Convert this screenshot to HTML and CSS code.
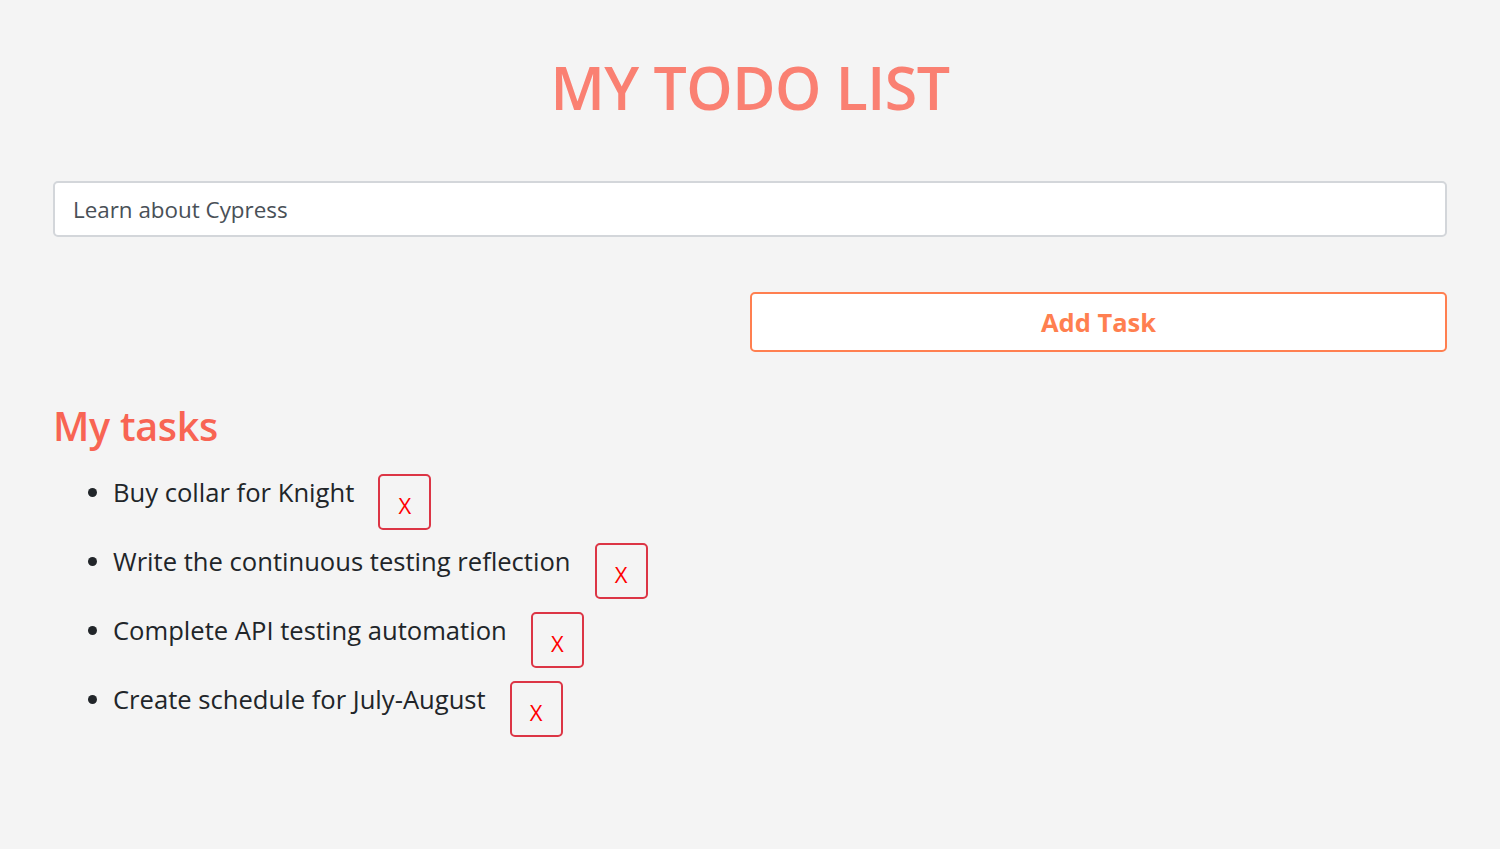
FILE: index.html
```html
<!DOCTYPE html>
<html lang="en">
<head>
<meta charset="utf-8">
<title>My Todo List</title>
<link rel="stylesheet" href="styles.css">
</head>
<body>
<div class="container">
  <h1 class="title">MY TODO LIST</h1>
  <form class="todo-form">
    <input class="task-input" type="text" value="Learn about Cypress">
    <div class="form-row">
      <div></div>
      <button class="add-btn" type="button">Add Task</button>
    </div>
  </form>
  <h2 class="subtitle">My tasks</h2>
  <ul class="tasks">
    <li class="task"><div class="task-row"><span class="task-text">Buy collar for Knight</span><button class="del-btn" type="button">X</button></div></li>
    <li class="task"><div class="task-row"><span class="task-text">Write the continuous testing reflection</span><button class="del-btn" type="button">X</button></div></li>
    <li class="task"><div class="task-row"><span class="task-text">Complete API testing automation</span><button class="del-btn" type="button">X</button></div></li>
    <li class="task"><div class="task-row"><span class="task-text">Create schedule for July-August</span><button class="del-btn" type="button">X</button></div></li>
  </ul>
</div>
</body>
</html>
```

FILE: styles.css
```css
* { box-sizing: border-box; }
html, body { margin: 0; padding: 0; }
body {
  background: #f4f4f4;
  font-family: "Open Sans", "Noto Sans", sans-serif;
  color: #212529;
}
.container {
  padding: 0 53px;
}
.title {
  margin: 0;
  padding-top: 47px;
  height: 181px;
  text-align: center;
  font-size: 59px;
  font-weight: 600;
  line-height: 80px;
  color: #fa8072;
  letter-spacing: -0.5px;
}
.task-input {
  display: block;
  width: 100%;
  height: 56px;
  padding: 0 18px;
  border: 2px solid #d3d6da;
  border-radius: 5px;
  background: #fff;
  font-family: inherit;
  font-size: 22.4px;
  color: #495057;
  outline: none;
}
.form-row {
  display: grid;
  grid-template-columns: 1fr 1fr;
  margin-top: 55px;
}
.add-btn {
  height: 60px;
  border: 2px solid #ff7f50;
  border-radius: 5px;
  background: #fff;
  color: #ff7f50;
  font-family: inherit;
  font-weight: 700;
  font-size: 25.5px;
  padding: 0;
}
.subtitle {
  margin: 46px 0 0;
  font-size: 39.5px;
  font-weight: 600;
  line-height: 56px;
  color: #f86453;
  letter-spacing: -0.3px;
}
.tasks {
  margin: 20px 0 0;
  padding-left: 60px;
}
.task {
  height: 69px;
  font-size: 25.6px;
  line-height: 38px;
}
.task-row {
  display: flex;
  align-items: flex-start;
}
.del-btn {
  margin-left: 24px;
  width: 53px;
  height: 56px;
  border: 2px solid #dc3545;
  border-radius: 5px;
  background: transparent;
  color: #ff0000;
  font-family: inherit;
  font-size: 22px;
  padding: 5px 0 0;
  line-height: 1;
}
```
